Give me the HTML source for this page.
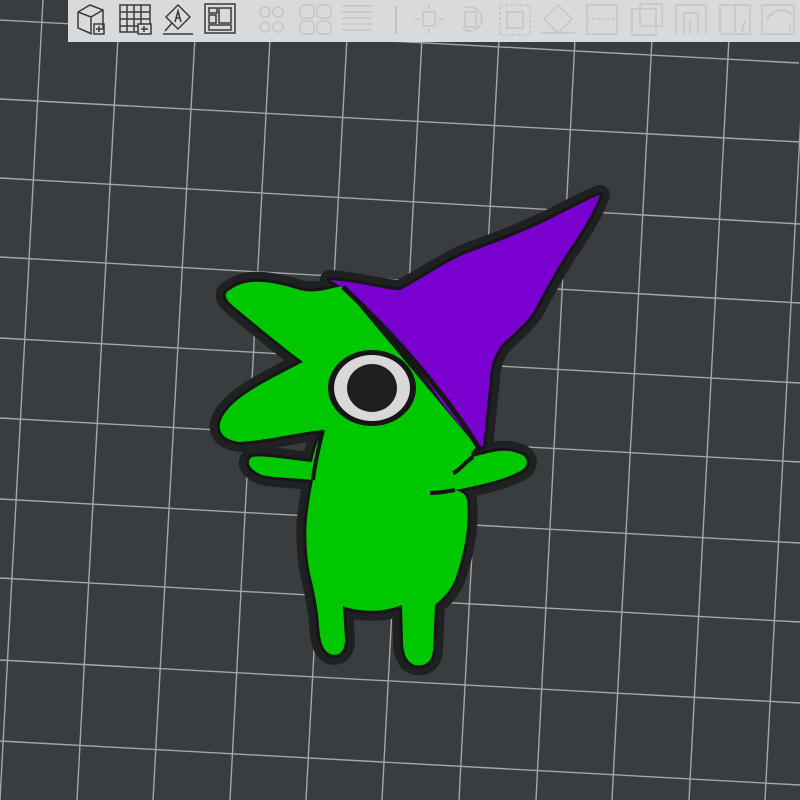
<!DOCTYPE html>
<html><head><meta charset="utf-8"><style>
html,body{margin:0;padding:0;width:800px;height:800px;overflow:hidden;background:#3a3d3f;font-family:"Liberation Sans",sans-serif}
svg{position:absolute;left:0;top:0;display:block}
</style></head><body>
<svg width="800" height="800" viewBox="0 0 800 800">
<rect width="800" height="800" fill="#3a3d3f"/>
<g stroke="#a4a7a9" stroke-width="1.4" fill="none">
<line x1="-1" y1="20" x2="799" y2="63"/>
<line x1="0" y1="99" x2="800" y2="142"/>
<line x1="0" y1="178" x2="800" y2="224"/>
<line x1="0" y1="257" x2="800" y2="303"/>
<line x1="0" y1="338" x2="800" y2="383"/>
<line x1="0" y1="418" x2="800" y2="462"/>
<line x1="0" y1="499" x2="800" y2="543"/>
<line x1="0" y1="578" x2="800" y2="622"/>
<line x1="0" y1="660" x2="800" y2="703"/>
<line x1="0" y1="741" x2="800" y2="785"/>
<line x1="43" y1="0" x2="0" y2="800"/>
<line x1="120" y1="0" x2="77" y2="800"/>
<line x1="197" y1="0" x2="153" y2="800"/>
<line x1="272" y1="0" x2="230" y2="800"/>
<line x1="349" y1="0" x2="306" y2="800"/>
<line x1="424" y1="0" x2="382" y2="800"/>
<line x1="501" y1="0" x2="459" y2="800"/>
<line x1="577" y1="0" x2="536" y2="800"/>
<line x1="654" y1="0" x2="612" y2="800"/>
<line x1="731" y1="0" x2="689" y2="800"/>
<line x1="807" y1="0" x2="765" y2="800"/>
</g>
<defs>
<path id="body" d="M230 290 C245 278 268 280 300 290 C320 295 335 285 343 287 L477 447 C470 452 470 456 473 457 C490 452 505 448 517 453 C528 455 530 465 522 470 C505 480 480 485 455 490 C463 492 466 495 467 500 C470 530 462 560 455 580 C448 595 440 600 435 605 L433 650 C432 662 425 667 415 665 C405 662 403 650 403 640 L402 605 C390 610 375 612 360 610 C350 609 345 607 343 606 L345 640 C345 652 338 657 330 654 C322 650 320 640 319 625 C318 610 315 595 312 582 C306 560 305 530 308 510 C310 495 312 485 313 480 C295 478 275 478 262 475 C250 470 245 462 252 457 C265 455 290 460 312 462 C314 450 318 440 323 430 C300 432 270 440 240 442 C222 440 216 430 222 418 C232 398 262 383 303 362 C280 345 250 320 232 305 C224 298 224 292 230 290 Z" fill="#00c800"/>
<path id="hat" d="M330 280 C360 282 385 290 400 290 C420 280 445 262 467 253 C495 243 515 235 533 227 C560 215 585 200 600 195 C595 210 580 235 567 253 C550 280 540 300 533 313 C520 330 505 340 500 347 C492 360 490 370 490 380 C487 405 485 430 483 447 C470 440 455 420 440 400 C420 370 390 330 360 300 C350 292 338 285 330 280 Z" fill="#7a00d0"/>
</defs>
<g fill="none" stroke="#1f2021" stroke-linejoin="round" stroke-width="20">
<use href="#body"/><use href="#hat"/>
</g>
<g stroke="#161616" stroke-width="6" stroke-linejoin="round">
<use href="#body"/><use href="#hat"/>
</g>
<use href="#body"/><use href="#hat"/>
<path d="M343 287 C400 340 450 400 480 450" stroke="#161616" stroke-width="5" fill="none"/>
<path d="M323 430 C318 450 314 470 313 480 M455 490 C445 492 435 493 430 493 M473 457 C465 462 458 472 453 473" stroke="#161616" stroke-width="4" fill="none"/>
<ellipse cx="372" cy="388" rx="44" ry="38" fill="#161616"/>
<ellipse cx="372" cy="388" rx="38" ry="33" fill="#d8d8d8"/>
<ellipse cx="372" cy="388" rx="25" ry="24" fill="#1e1e1e"/>
</svg>
<svg width="800" height="45" viewBox="0 0 800 45">
<rect x="68" y="0" width="732" height="42" fill="#d9dadb"/>
<g fill="none" stroke="#3b3b3b" stroke-width="1.5">
<path d="M78 12 L90 5 L103 10 L103 30 M78 12 L78 28 L92 34 M78 12 L91 17 L103 10 M91 17 L91 34"/>
<rect x="94" y="24" width="10" height="10"/><path d="M99 26 V32 M96 29 H102"/>
<rect x="120" y="5" width="30" height="27"/><path d="M127 5 V32 M134 5 V32 M141 5 V32 M120 12 H150 M120 19 H150 M120 26 H150"/>
<rect x="138" y="24" width="13" height="10" fill="#d9dadb"/><path d="M144 26 V32 M141 29 H148"/>
<path d="M178 5 L190 17 L178 29 L166 17 Z M172 23 L165 31 M163 34 H193"/>
<path d="M175 22 L178 11 L181 22 M176 18 H180"/>
<rect x="205" y="4" width="30" height="29"/><rect x="209" y="8" width="8" height="5"/><rect x="209" y="15" width="7" height="8"/><rect x="219" y="8" width="12" height="15"/><rect x="209" y="25" width="22" height="5"/>
</g>
<g fill="none" stroke="#c3c5c7" stroke-width="1.5">
<circle cx="265" cy="12" r="5"/><circle cx="278" cy="12" r="5"/><circle cx="265" cy="27" r="5"/><circle cx="278" cy="27" r="5"/>
<rect x="300" y="5" width="14" height="13" rx="4"/><rect x="317" y="5" width="14" height="13" rx="4"/><rect x="300" y="21" width="14" height="13" rx="4"/><rect x="317" y="21" width="14" height="13" rx="4"/>
<path d="M342 6 H372 M342 12 H372 M342 18 H372 M342 24 H372 M342 30 H372"/>
<rect x="423" y="12" width="12" height="14"/><path d="M429 4 V10 M429 28 V34 M414 19 H420 M438 19 H444"/>
<path d="M465 8 A12 12 0 1 1 462 28"/><rect x="465" y="12" width="11" height="15"/>
<rect x="500" y="5" width="30" height="30" stroke-dasharray="3 2"/><rect x="507" y="12" width="16" height="16"/>
<path d="M558 5 L572 19 L558 33 L544 19 Z M541 33 H575"/>
<rect x="587" y="5" width="30" height="29"/><path d="M587 19 H617" stroke-dasharray="3 2"/>
<rect x="632" y="9" width="24" height="26"/><rect x="640" y="4" width="22" height="22"/>
<path d="M676 34 V5 H706 V34 M684 34 V13 H698 V34 M690 34 V20"/>
<rect x="720" y="5" width="30" height="29"/><path d="M735 5 V34 M745 20 L742 32"/>
<rect x="762" y="5" width="32" height="29"/><path d="M766 20 C775 8 785 8 792 15 M790 25 V32"/>
</g>
<path d="M396 6 V34" stroke="#b5b7b9" stroke-width="1.5"/>
</svg>
</body></html>
